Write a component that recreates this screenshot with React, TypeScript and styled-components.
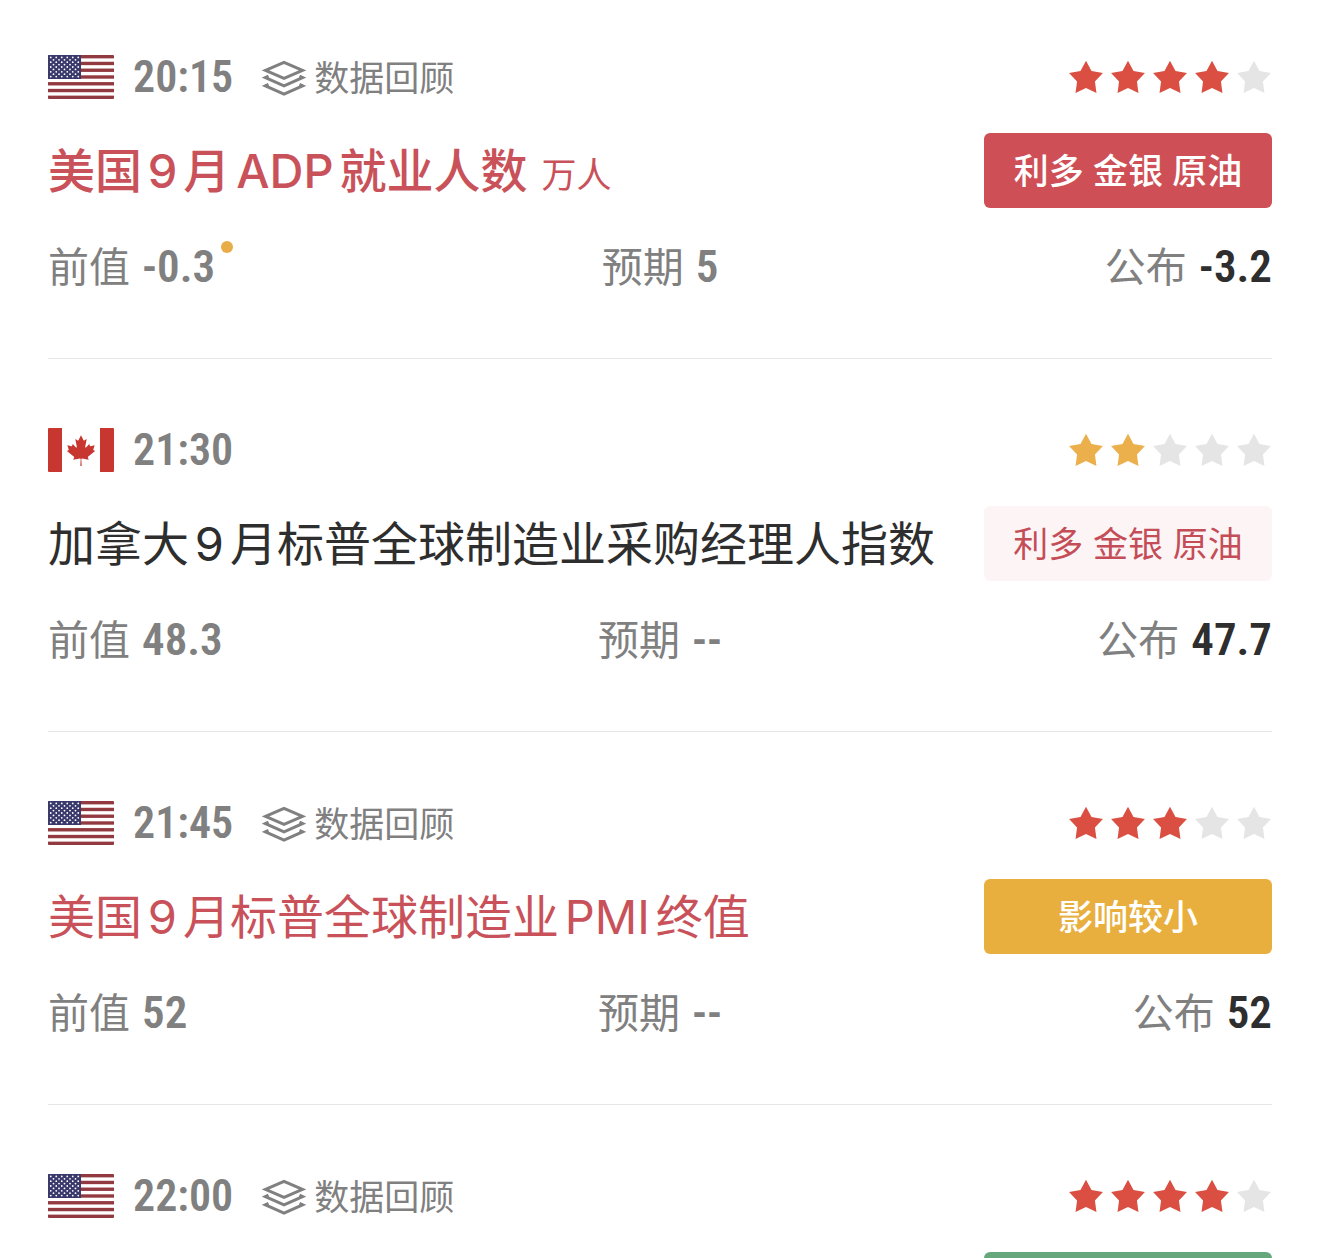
import React from "react";
import styled, { createGlobalStyle } from "styled-components";

type Tone = "red" | "redLight" | "gold" | "green";

interface EventItem {
  country: "us" | "ca";
  time: string;
  review?: boolean;
  stars: number;
  starColor: string;
  title?: string;
  unit?: string;
  titleColor?: string;
  strong?: boolean;
  tone: Tone;
  tag?: string;
  previous?: string;
  revised?: boolean;
  forecast?: string;
  actual?: string;
}

const RED = "#da4f42";
const GOLD = "#ebb04c";
const TITLE_RED = "#c9525a";
const INK = "#2e2e2e";

const events: EventItem[] = [
  {
    country: "us", time: "20:15", review: true, stars: 4, starColor: RED,
    title: "美国9月ADP就业人数", unit: "万人", titleColor: TITLE_RED, strong: true,
    tone: "red", tag: "利多 金银 原油",
    previous: "-0.3", revised: true, forecast: "5", actual: "-3.2",
  },
  {
    country: "ca", time: "21:30", stars: 2, starColor: GOLD,
    title: "加拿大9月标普全球制造业采购经理人指数", titleColor: INK,
    tone: "redLight", tag: "利多 金银 原油",
    previous: "48.3", forecast: "--", actual: "47.7",
  },
  {
    country: "us", time: "21:45", review: true, stars: 3, starColor: RED,
    title: "美国9月标普全球制造业PMI终值", titleColor: TITLE_RED,
    tone: "gold", tag: "影响较小",
    previous: "52", forecast: "--", actual: "52",
  },
  { country: "us", time: "22:00", review: true, stars: 4, starColor: RED, tone: "green" },
];

const tones: Record<Tone, { bg: string; fg: string; weight: number }> = {
  red: { bg: "#ce4f56", fg: "#fff", weight: 500 },
  redLight: { bg: "#fdf5f5", fg: "#c44d58", weight: 400 },
  gold: { bg: "#e8af3f", fg: "#fff", weight: 500 },
  green: { bg: "#66a77c", fg: "#fff", weight: 500 },
};

const GlobalStyle = createGlobalStyle`
  *, *::before, *::after { box-sizing: border-box; }
  body {
    margin: 0;
    background: #fff;
    color: #808080;
    font-family: Inter, "Noto Sans CJK SC", sans-serif;
  }
`;

const Page = styled.main`
  height: 100vh;
  overflow: hidden;
  padding: 55px 48px 0;
`;

const List = styled.ul`
  display: flex;
  flex-direction: column;
  gap: 69px;
  margin: 0;
  padding: 0;
  list-style: none;
`;

const Item = styled.li`
  padding-bottom: 63px;
  border-bottom: 1px solid #e6e6e6;
`;

const Head = styled.div`
  display: flex;
  align-items: center;
  height: 44px;
`;

const Flag = styled.svg`
  flex: none;
  width: 66px;
  height: 44px;
  border-radius: 1px;
`;

const numberFont = `"Roboto Condensed", Roboto, sans-serif`;

const Time = styled.time`
  margin-left: 19px;
  font: 600 44px/44px ${numberFont};
`;

const ReviewButton = styled.button`
  display: flex;
  align-items: center;
  gap: 8px;
  margin-left: 29px;
  padding: 2px 0 0;
  border: 0;
  background: none;
  color: inherit;
  font: 400 35px/44px Inter, "Noto Sans CJK SC", sans-serif;
  cursor: pointer;
`;

const LayersIcon = styled.svg`
  flex: none;
  width: 44px;
  height: 36px;
  fill: none;
  stroke: currentColor;
  stroke-width: 3;
`;

const Stars = styled.div`
  display: flex;
  gap: 6px;
  margin-left: auto;
`;

const Star = styled.svg<{ $color: string }>`
  width: 36px;
  height: 36px;
  fill: ${(p) => p.$color};
`;

const TitleRow = styled.div`
  display: flex;
  align-items: center;
  justify-content: space-between;
  gap: 24px;
  margin-top: 34px;
`;

const Title = styled.h2<{ $color?: string; $strong?: boolean }>`
  margin: 0;
  color: ${(p) => p.$color};
  font-size: 47px;
  line-height: 75px;
  font-weight: ${(p) => (p.$strong ? 500 : 400)};
  white-space: nowrap;
  text-autospace: normal;
`;

const Unit = styled.small`
  margin-left: 14px;
  font-size: 35px;
  line-height: 1;
  font-weight: 400;
`;

const Tag = styled.span<{ $tone: Tone }>`
  flex: none;
  width: 288px;
  height: 75px;
  padding-top: 2px;
  border-radius: 6px;
  background: ${(p) => tones[p.$tone].bg};
  color: ${(p) => tones[p.$tone].fg};
  font-size: 35px;
  line-height: 73px;
  font-weight: ${(p) => tones[p.$tone].weight};
  text-align: center;
`;

const Values = styled.dl`
  display: grid;
  grid-template-columns: repeat(3, 1fr);
  margin: 31px 0 0;
`;

const Value = styled.div<{ $align: string }>`
  display: flex;
  justify-content: ${(p) => p.$align};
  align-items: center;
  gap: 12px;
  height: 56px;
`;

const Label = styled.dt`
  font-size: 41px;
  line-height: 56px;
`;

const Figure = styled.dd<{ $dark?: boolean }>`
  position: relative;
  margin: 0;
  color: ${(p) => (p.$dark ? INK : "inherit")};
  font: 600 45px/56px ${numberFont};
`;

const RevisedDot = styled.i`
  position: absolute;
  top: 2px;
  right: -18px;
  width: 12px;
  height: 12px;
  border-radius: 50%;
  background: #e8ad46;
`;

const flagStars: [number, number][] = [];
for (let r = 0; r < 9; r++) {
  const n = r % 2 === 0 ? 6 : 5;
  for (let c = 0; c < n; c++) {
    flagStars.push([(r % 2 === 0 ? 2.75 : 5.5) + c * 5.5, 2.4 + r * 2.4]);
  }
}

function UsFlag() {
  return (
    <Flag viewBox="0 0 66 44" aria-hidden="true">
      <rect width="66" height="44" fill="#fff" />
      {[0, 1, 2, 3, 4, 5, 6].map((i) => (
        <rect key={i} y={i * 6.77} width="66" height="3.38" fill="#923a3f" />
      ))}
      <rect width="33" height="24" fill="#39396c" />
      {flagStars.map(([x, y]) => (
        <circle key={`${x}-${y}`} cx={x} cy={y} r="0.9" fill="#fff" />
      ))}
    </Flag>
  );
}

function CaFlag() {
  return (
    <Flag viewBox="0 0 66 44" aria-hidden="true">
      <rect width="66" height="44" fill="#fff" />
      <rect width="14" height="44" fill="#c8372f" />
      <rect x="52" width="14" height="44" fill="#c8372f" />
      <path
        transform="translate(33 22.5) scale(0.0076)"
        fill="#c8372f"
        d="m-90 2030 45-863a95 95 0 0 0-111-98l-859 151 116-320a65 65 0 0 0-20-73l-941-762 212-99a65 65 0 0 0 34-79l-186-572 542 115a65 65 0 0 0 73-38l105-247 423 454a65 65 0 0 0 111-57l-204-1052 327 189a65 65 0 0 0 91-27l332-652 332 652a65 65 0 0 0 91 27l327-189-204 1052a65 65 0 0 0 111 57l423-454 105 247a65 65 0 0 0 73 38l542-115-186 572a65 65 0 0 0 34 79l212 99-941 762a65 65 0 0 0-20 73l116 320-859-151a95 95 0 0 0-111 98l45 863z"
      />
    </Flag>
  );
}

const starPoints = Array.from({ length: 10 }, (_, i) => {
  const radius = i % 2 === 0 ? 17.8 : 9.4;
  const angle = (Math.PI / 5) * i;
  return `${(18 + radius * Math.sin(angle)).toFixed(2)},${(19.5 - radius * Math.cos(angle)).toFixed(2)}`;
}).join(" ");

function Rating({ value, color }: { value: number; color: string }) {
  return (
    <Stars>
      {[0, 1, 2, 3, 4].map((i) => (
        <Star key={i} $color={i < value ? color : "#e5e5e5"} viewBox="0 0 36 36" aria-hidden="true">
          <polygon points={starPoints} />
        </Star>
      ))}
    </Stars>
  );
}

function EventRow({ event }: { event: EventItem }) {
  return (
    <Item>
      <Head>
        {event.country === "us" ? <UsFlag /> : <CaFlag />}
        <Time>{event.time}</Time>
        {event.review && (
          <ReviewButton type="button">
            <LayersIcon viewBox="0 0 44 36" aria-hidden="true">
              <path d="M22 2.4 40.5 10.4 22 18.4 3.5 10.4z" />
              <path d="M6.5 16.2 3.5 17.6 22 25.8 40.5 17.6 37.5 16.2" />
              <path d="M6.5 24.4 3.5 25.8 22 34 40.5 25.8 37.5 24.4" />
            </LayersIcon>
            数据回顾
          </ReviewButton>
        )}
        <Rating value={event.stars} color={event.starColor} />
      </Head>
      <TitleRow>
        <Title $color={event.titleColor} $strong={event.strong}>
          {event.title}
          {event.unit && <Unit>{event.unit}</Unit>}
        </Title>
        <Tag $tone={event.tone}>{event.tag}</Tag>
      </TitleRow>
      {event.previous && (
        <Values>
          <Value $align="flex-start">
            <Label>前值</Label>
            <Figure>
              {event.previous}
              {event.revised && <RevisedDot />}
            </Figure>
          </Value>
          <Value $align="center">
            <Label>预期</Label>
            <Figure>{event.forecast}</Figure>
          </Value>
          <Value $align="flex-end">
            <Label>公布</Label>
            <Figure $dark>{event.actual}</Figure>
          </Value>
        </Values>
      )}
    </Item>
  );
}

export default function App() {
  return (
    <>
      <GlobalStyle />
      <Page>
        <List>
          {events.map((event) => (
            <EventRow key={event.time} event={event} />
          ))}
        </List>
      </Page>
    </>
  );
}
